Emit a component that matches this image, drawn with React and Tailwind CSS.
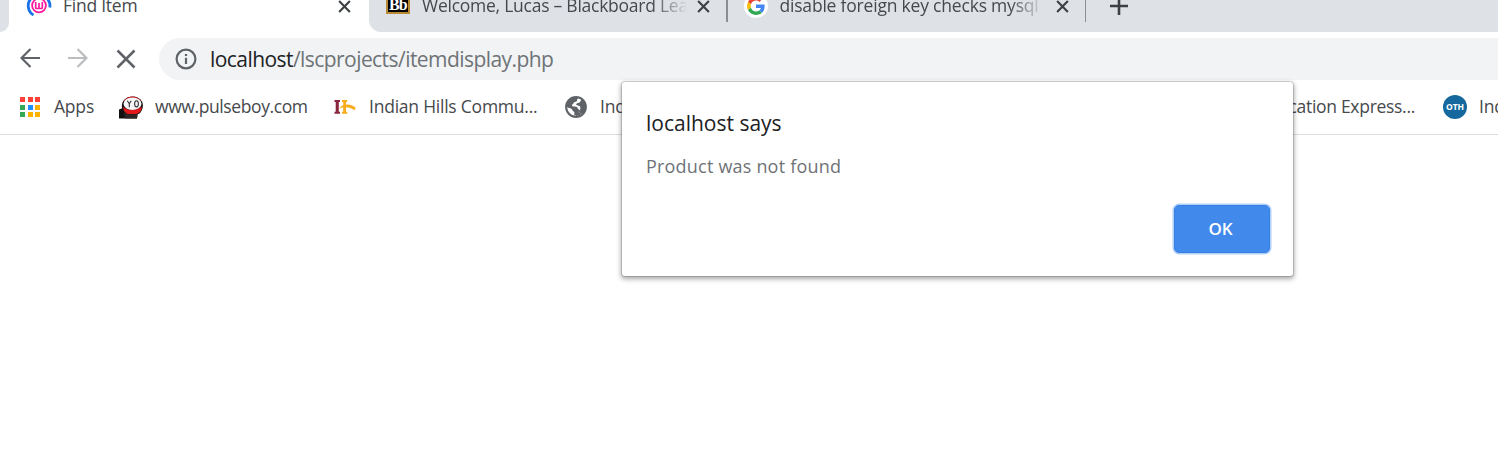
import React from "react";

function CloseIcon({ className }) {
  return (
    <svg viewBox="0 0 14 14" className={className} fill="none" stroke="#3c4043" strokeWidth="2.3">
      <path d="M1.200 1.200 12.800 12.800M12.800 1.200 1.200 12.800" />
    </svg>
  );
}

function SpinnerFavicon() {
  return (
    <svg viewBox="0 0 26 26" className="h-[26px] w-[26px] shrink-0" fill="none">
      <path d="M7.400 22.100A11 11 0 0 1 6 4.500" stroke="#1a73e8" strokeWidth="2.800" />
      <path d="M20 4.500A11 11 0 0 1 23.800 14.500" stroke="#1a73e8" strokeWidth="2.800" />
      <circle cx="13" cy="12.500" r="6.900" stroke="#ff1aa0" strokeWidth="1.800" />
      <path d="M9.700 9v5.400q0 1.100 1.100 1.100h4.400q1.100 0 1.100-1.100V9M13 10v5" stroke="#ff1aa0" strokeWidth="1.700" />
    </svg>
  );
}

function GoogleFavicon() {
  return (
    <svg viewBox="0 0 24 24" className="h-6 w-6 shrink-0">
      <circle cx="12" cy="12" r="12" fill="#fff" />
      <g transform="translate(3 3) scale(.375)">
        <path fill="#EA4335" d="M24 9.500c3.540 0 6.710 1.220 9.210 3.600l6.850-6.850C35.900 2.380 30.470 0 24 0 14.620 0 6.510 5.380 2.560 13.220l7.980 6.190C12.430 13.720 17.740 9.500 24 9.500z" />
        <path fill="#4285F4" d="M46.980 24.550c0-1.570-.15-3.090-.38-4.550H24v9.020h12.940c-.58 2.960-2.260 5.480-4.780 7.180l7.730 6c4.510-4.180 7.090-10.360 7.090-17.650z" />
        <path fill="#FBBC05" d="M10.530 28.590c-.48-1.450-.76-2.990-.76-4.590s.27-3.140.76-4.590l-7.980-6.190C.92 16.460 0 20.120 0 24s.92 7.540 2.560 10.780l7.970-6.190z" />
        <path fill="#34A853" d="M24 48c6.480 0 11.930-2.130 15.890-5.810l-7.730-6c-2.150 1.450-4.920 2.300-8.160 2.300-6.260 0-11.570-4.220-13.470-9.910l-7.980 6.190C6.510 42.620 14.620 48 24 48z" />
      </g>
    </svg>
  );
}

function AppsIcon() {
  return (
    <span className="grid h-5 w-5 shrink-0 grid-cols-[5px_5px_5px] grid-rows-[5px_5px_5px] gap-[2.5px]">
      <i className="bg-[#ff4036]" /><i className="bg-[#ff4036]" /><i className="bg-[#ff4036]" />
      <i className="bg-[#34a853]" /><i className="bg-[#1e90ff]" /><i className="bg-[#ffb300]" />
      <i className="bg-[#34a853]" /><i className="bg-[#ffb300]" /><i className="bg-[#ffb300]" />
    </span>
  );
}

function CapIcon() {
  return (
    <svg viewBox="0 0 24 24" className="h-6 w-6 shrink-0">
      <path d="M0 23.500V14.500L4 13l4 3 11 1-1 6.500z" fill="#151010" />
      <path d="M3 9C5 .5 18-1.500 23 6.500c2 4 .5 10-3 12.500L7 18.500C3 16 2.500 13 3 9z" fill="#161313" />
      <path d="M5 6C8 .5 18 0 21.500 5.500v3H5z" fill="#c51f20" />
      <ellipse cx="13.500" cy="8.800" rx="9" ry="6.300" fill="#f6f6f6" />
      <path d="M4 11.500c3 4.500 15 4.500 18.500 0 .5 4-1.500 6.500-5 7.500H9c-3-1-4.500-3-5-7.500z" fill="#e3181b" />
      <path d="M5 17.500c3 2.500 9 2.200 13.500 1.200l-.5 4.800H6z" fill="#302525" />
      <path d="m8.300 5.800 2 3L12.200 5.800M10.300 8.800v3.400" fill="none" stroke="#333" strokeWidth="1.100" />
      <ellipse cx="17.500" cy="8.800" rx="1.900" ry="3.100" fill="none" stroke="#333" strokeWidth="1.100" />
    </svg>
  );
}

function HillsIcon() {
  return (
    <svg viewBox="0 0 22 16" className="h-4 w-[22px] shrink-0">
      <path d="M.5 1H6v2H4.800v9.800H6v2H.500v-2h1.200V3H.500z" fill="#8a2640" />
      <path d="M8 1h5.200v2H12v9.800h1.200v2H8v-2h1.200V3H8z" fill="#f9ad1d" />
      <path d="M5 9.500C9 4 18 4.800 21.800 9L20.300 11.200C16 7.500 10.500 7.500 5 9.500z" fill="#f9ad1d" />
    </svg>
  );
}

function GlobeIcon() {
  return (
    <svg viewBox="0 0 22 22" className="h-[22px] w-[22px] shrink-0">
      <circle cx="11" cy="11" r="10.900" fill="#5f6368" />
      <path d="M13.200 2.500C12 3 11.800 4 12.200 5c-1.200 1-3.200.7-3.700 2.200-.2 1-1.700 1-1.500 2.300.2 1 1.500.9 2.500.9 1.700-.1 3.200.6 3.300 2.200.1 1 1.900.7 1.700 2-.3 1.400-1.700 1.700-2.200 2.900-.5 1.300-1.500 2-2.800 1.900-.5-1.500.3-2.500-.5-3.600-1.800-.5-1.500-2.500-3-3.200-1.200-.5-2.400-.5-3.700-1.600C2.200 15.500 6 19.700 11 19.700c2.500 0 4.300-.8 5.700-2.200-1.600.3-2.700-.5-2.600-1.900 1.200-1.800 2-3.900.5-5.500-1.200-.9-2.900-.7-3.600-1.700.7-1.600 2.700-1.200 3.800-2.100.9-.8 1.300-1.800.9-3z" fill="#fff" />
      <path d="M11 17.500c1-.3 2-1 2.500-2 .7 1.500 1.800 1.700 3.200 2-1.500 1.500-3.400 2.500-5.700 2.500z" fill="#5f6368" />
    </svg>
  );
}

export default function App() {
  return (
    <div className="relative h-[462px] w-[1498px] overflow-hidden bg-white font-['Open_Sans','Noto_Sans',sans-serif] text-[#46494c]">
      {/* Tab strip */}
      <div className="flex h-8 overflow-hidden text-[17.500px]">
        <div className="w-[9px] rounded-br-[9px] bg-[#dee1e6]" />
        <div className="flex h-3 w-[360px] shrink-0 items-center self-start pl-[17px]">
          <SpinnerFavicon />
          <span className="mb-px ml-[11px] w-[270px] whitespace-nowrap tracking-[-0.250px]">Find Item</span>
          <CloseIcon className="ml-[5px] h-[13px] w-[13px] shrink-0" />
        </div>
        <div className="flex flex-1 rounded-bl-[12px] bg-[#dee1e6]">
          <div className="flex h-3 w-[357px] shrink-0 items-center pl-[17px]">
            <span className="mb-[9px] flex h-6 w-6 shrink-0 items-center justify-center border-2 border-[#b98a35] bg-black pt-[7px] font-['Liberation_Serif',serif] text-[16px] font-bold tracking-[-0.8px] text-white">Bb</span>
            <span className="mb-px ml-3 w-[264px] overflow-hidden whitespace-nowrap [mask-image:linear-gradient(to_right,black_230px,transparent_266px)] tracking-[-0.250px]">Welcome, Lucas – Blackboard Learn</span>
            <CloseIcon className="ml-[11px] h-[13px] w-[13px] shrink-0" />
          </div>
          <div className="h-[22px] w-[1.500px] bg-[#8b8e92]" />
          <div className="flex h-3 w-[357px] shrink-0 items-center pl-[16px]">
            <GoogleFavicon />
            <span className="mb-px ml-3 w-[262px] overflow-hidden whitespace-nowrap [mask-image:linear-gradient(to_right,black_230px,transparent_264px)] tracking-[-0.2px]">disable foreign key checks mysql</span>
            <CloseIcon className="ml-[14px] h-[13px] w-[13px] shrink-0" />
          </div>
          <div className="h-[22px] w-[1.500px] bg-[#8b8e92]" />
          <svg viewBox="0 0 18 18" className="-mt-[3px] ml-6 h-[18px] w-[18px]" stroke="#3c4043" strokeWidth="2.600"><path d="M9 0v18M0 9h18" /></svg>
        </div>
      </div>

      {/* Toolbar */}
      <div className="flex h-[48px] items-end">
        <div className="flex h-[42px] w-[159px] shrink-0 items-center pl-5">
          <svg viewBox="0 0 20 20" className="mb-[2px] h-5 w-5" fill="none" stroke="#5f6368" strokeWidth="2.200"><path d="M20 10H2M10.500 1 1.500 10l9 9" /></svg>
          <svg viewBox="0 0 20 20" className="mb-[2px] ml-7 h-5 w-5" fill="none" stroke="#babcbe" strokeWidth="2.200"><path d="M0 10h18M9.500 1l9 9-9 9" /></svg>
          <svg viewBox="0 0 20 20" className="ml-7 h-5 w-5" fill="none" stroke="#5f6368" strokeWidth="2.500"><path d="m1.500 1.500 17 17M18.500 1.500l-17 17" /></svg>
        </div>
        <div className="flex h-[42px] flex-1 items-center rounded-l-full bg-[#f1f3f4] pl-[16px]">
          <svg viewBox="0 0 22 22" className="h-[22px] w-[22px]" fill="none" stroke="#5f6368" strokeWidth="2.200"><circle cx="11" cy="11" r="9.400" /><path d="M11 9.800V16M11 6v2.100" /></svg>
          <span className="mt-px ml-[13px] whitespace-nowrap text-[21px] tracking-[-0.560px] text-[#6f7377]"><span className="text-[#202124]">localhost</span>/lscprojects/itemdisplay.php</span>
        </div>
      </div>

      {/* Bookmarks */}
      <div className="flex h-[55px] items-center overflow-hidden border-b border-[#dadce0] pl-5 text-[17.500px] whitespace-nowrap">
        <AppsIcon />
        <span className="mb-px ml-[14px] w-[65px] shrink-0 tracking-[-0.2px]">Apps</span>
        <CapIcon />
        <span className="mb-px ml-3 w-[179px] shrink-0 tracking-[-0.400px]">www.pulseboy.com</span>
        <HillsIcon />
        <span className="mb-px ml-[13px] w-[196px] shrink-0 tracking-[-0.230px]">Indian Hills Commu...</span>
        <GlobeIcon />
        <span className="mb-px ml-[13px] w-[599px] shrink-0 tracking-[-0.2px]">Ind</span>
        <span className="mb-px flex w-[216px] shrink-0 justify-end tracking-[-0.300px]">Education Express...</span>
        <span className="ml-7 flex h-6 w-6 shrink-0 items-center justify-center rounded-full bg-[#14689e] text-[8.500px] font-bold text-white">OTH</span>
        <span className="mb-px ml-3 shrink-0 tracking-[-0.2px]">Indian</span>
      </div>

      {/* Alert dialog */}
      <div role="dialog" className="absolute top-[82px] left-[622px] flex h-[194px] w-[671px] flex-col rounded-[3px] bg-white px-6 shadow-[0_0_0_1px_rgba(0,0,0,0.13),0_2px_5px_1px_rgba(0,0,0,0.35)]">
        <h1 className="mt-[26px] text-[21px] leading-[30px] text-[#202124]">localhost says</h1>
        <p className="mt-[15px] text-[18px] leading-[26px] tracking-[0.200px] text-[#6f7377]">Product was not found</p>
        <button className="mt-[26px] mr-[-1px] flex h-[48px] w-[96px] items-center justify-center self-end rounded-[5px] border border-[#3581e4] bg-[#4189eb] pr-[3px] text-[17px] font-semibold text-white shadow-[0_0_0_1.500px_#b3d0f8]">OK</button>
      </div>
    </div>
  );
}
